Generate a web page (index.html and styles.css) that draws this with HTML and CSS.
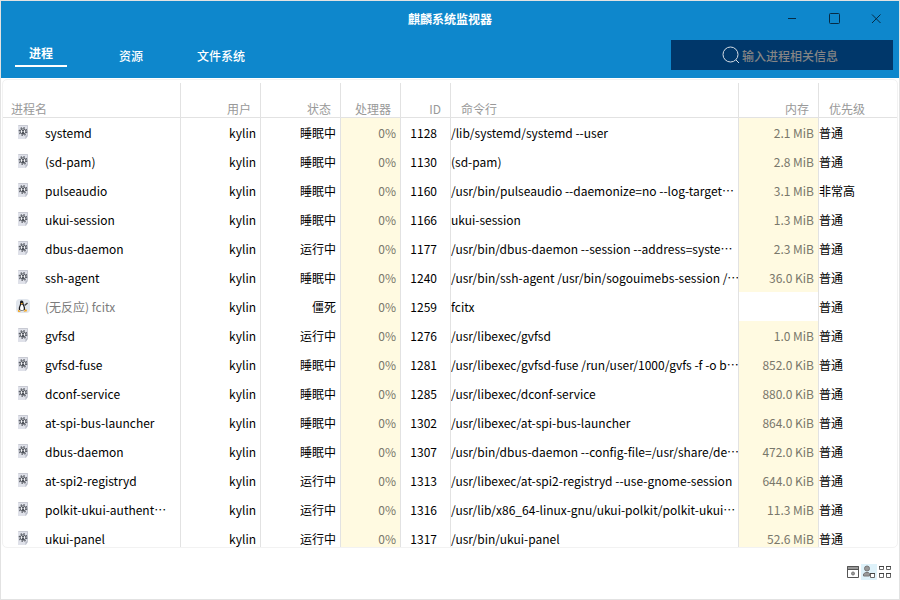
FILE: index.html
```html
<!DOCTYPE html>
<html lang="zh-CN">
<head>
<meta charset="utf-8">
<title>麒麟系统监视器</title>
<link rel="stylesheet" href="styles.css">
</head>
<body>
<svg class="defs" aria-hidden="true">
  <symbol id="icon-exec" viewBox="0 0 16 16">
    <path d="M3 0h10v11l-2 3h-8z" fill="#dfe1e9"/>
    <path d="M3.500 .5h9v10" fill="none" stroke="#c8cad3"/>
    <path d="M10.500 14l2.500-3.500h-2.500z" fill="#b4b7c2"/>
    <circle cx="8" cy="6.500" r="2.700" fill="#f4f5f8" stroke="#50545c"/>
    <circle cx="8" cy="6.500" r="3.700" fill="none" stroke="#5c6068" stroke-width="1.400" stroke-dasharray="1.450 1.450"/>
    <circle cx="8" cy="5.800" r="1" fill="#3f434b"/>
    <path d="M7 7h2v2h-2z" fill="#50545c"/>
  </symbol>
  <symbol id="icon-fcitx" viewBox="0 0 16 16">
    <rect x="1" y="0" width="14" height="14" rx="4" fill="#e1e6ed"/>
    <path d="M6.500 1.500c1.800 0 2 1.700 2.200 3.500.3 2 1.800 3 1.300 5.500-.4 1.500-5.800 1.500-6.200 0C3.500 8 4.800 7 5 5c.1-1.800-.2-3.500 1.500-3.500z" fill="#1d1d20"/>
    <path d="M6.800 5.200c1.600 1 2.600 4.300 1.500 6h-2.800c-1-2-.2-4.800 1.300-6z" fill="#fff"/>
    <path d="M5.500 4h2.500l-1.200 1.500zM2.800 10.500l3.200 2.300-2.800.2zM8.500 12.800l2.500-3 1.200 2.400z" fill="#f5a51d"/>
    <path d="M9.500 6.500l3-2.500" stroke="#444" stroke-width="1.500"/>
  </symbol>
</svg>
<div class="window">
  <header class="topbar">
    <div class="titlebar">
      <h1>麒麟系统监视器</h1>
      <div class="controls">
        <button type="button" aria-label="最小化"><svg viewBox="0 0 12 12"><path d="M2 5.500h8"/></svg></button>
        <button type="button" aria-label="最大化"><svg viewBox="0 0 12 12"><rect x="1.500" y=".5" width="10" height="10" rx="1"/></svg></button>
        <button type="button" aria-label="关闭"><svg viewBox="0 0 12 12"><path d="M2 1.500l8.500 8.500M10.500 1.500l-8.500 8.500"/></svg></button>
      </div>
    </div>
    <div class="toolbar">
      <nav class="tabs">
        <a href="#processes" class="active" aria-current="page">进程</a>
        <a href="#resources">资源</a>
        <a href="#filesystems">文件系统</a>
      </nav>
      <label class="search">
        <svg viewBox="0 0 18 18" aria-hidden="true"><circle cx="8.500" cy="8.500" r="7.500"/><path d="M14 14l3 3"/></svg>
        <input type="text" placeholder="输入进程相关信息" aria-label="输入进程相关信息">
      </label>
    </div>
  </header>
  <main class="list" id="processes">
    <table>
      <colgroup><col class="c-name"><col class="c-user"><col class="c-state"><col class="c-cpu"><col class="c-id"><col><col class="c-mem"><col class="c-prio"></colgroup>
      <thead><tr><th>进程名</th><th class="num">用户</th><th class="num">状态</th><th class="num">处理器</th><th class="num">ID</th><th>命令行</th><th class="num">内存</th><th>优先级</th></tr></thead>
      <tbody id="rows"></tbody>
    </table>
  </main>
  <footer class="views">
    <button type="button" aria-label="活动的进程"><svg viewBox="0 0 16 16"><path d="M2 2h12v4H2z" fill="#999"/><path d="M2.500 2.500h11v11h-11zM2 5.500h12" fill="none" stroke="#555"/><circle cx="8" cy="9.500" r="1.500" fill="#999" stroke="#777"/></svg></button>
    <button type="button" class="selected" aria-label="我的进程"><svg viewBox="0 0 16 16"><circle cx="6" cy="4.500" r="2.500" fill="#999" stroke="#777"/><path d="M2.500 12v-2l2-1.500h3l1 1v2.500z" fill="#999" stroke="#777"/><path d="M9.500 9.500h4v4h-4z" fill="#fff" stroke="#666"/><path d="M9 9.500h5" stroke="#444"/></svg></button>
    <button type="button" aria-label="全部进程"><svg viewBox="0 0 16 16"><path d="M2.500 2.500h4v3h-4zM9.500 2.500h4v3h-4zM2.500 9.500h4v4h-4zM9.500 9.500h4v4h-4z" fill="#fff" stroke="#666"/><path d="M2 2.500h5M9 2.500h5M2 9.500h5M9 9.500h5" stroke="#444"/></svg></button>
  </footer>
</div>
<script src="app.js"></script>
</body>
</html>
```
FILE: styles.css
```css
* { box-sizing: border-box; }

body {
  margin: 0;
  font: 12px/18px "Noto Sans CJK SC", sans-serif;
  color: #000;
  background: #fff;
}

.defs { position: absolute; width: 0; height: 0; }

button {
  padding: 0;
  border: 0;
  background: none;
}

.window {
  display: flex;
  flex-direction: column;
  height: 100vh;
  border: 1px solid #e2e2e2;
}

.topbar {
  flex: none;
  padding-bottom: 8px;
  background: #0e87cc;
  color: #fff;
}

.titlebar {
  display: grid;
  grid-template-columns: 1fr auto 1fr;
  align-items: center;
  height: 36px;
}

.titlebar h1 {
  grid-column: 2;
  margin: 0;
  font-size: 12px;
  font-weight: 700;
}

.controls {
  display: flex;
  justify-content: flex-end;
  gap: 30px;
  padding-right: 17px;
}

.controls button { display: flex; }

.controls svg {
  width: 12px;
  height: 12px;
  fill: none;
  stroke: #062b45;
}

.toolbar {
  display: flex;
  justify-content: space-between;
  align-items: flex-start;
  padding: 3px 6px 0 14px;
}

.tabs {
  display: flex;
  padding-top: 4px;
}

.tabs a {
  width: 90px;
  padding-top: 3px;
  color: #fff;
  font-weight: 500;
  text-align: center;
  text-decoration: none;
}

.tabs .active {
  width: 52px;
  margin-right: 19px;
  padding: 0 0 3px;
  border-bottom: 2px solid #fff;
  font-weight: 700;
}

.search {
  display: flex;
  justify-content: center;
  align-items: center;
  gap: 2px;
  width: 222px;
  height: 30px;
  background: #00376a;
}

.search svg {
  width: 18px;
  height: 18px;
  fill: none;
  stroke: #d5dde6;
}

.search input {
  width: 100px;
  padding: 2px 0 0;
  border: 0;
  outline: 0;
  background: none;
  color: #fff;
  font: inherit;
  font-weight: 500;
}

.search input::placeholder { color: #858585; opacity: 1; }

.list {
  flex: 1;
  min-height: 0;
  margin: 1px 1px 0;
  padding-top: 3px;
  overflow: hidden;
  border: 1px solid #f2f2f2;
  border-radius: 5px;
}

table {
  width: 100%;
  table-layout: fixed;
  border-collapse: separate;
  border-spacing: 0;
}

.c-name { width: 178px; }
.c-user, .c-state, .c-mem { width: 80px; }
.c-cpu { width: 60px; }
.c-id { width: 50px; }
.c-prio { width: 78px; }

th, td {
  overflow: hidden;
  border-right: 1px solid #e2e2e2;
  text-align: left;
  white-space: nowrap;
}

th:last-child, td:last-child { border-right: 0; }

th {
  height: 35px;
  padding: 17px 10px 0;
  border-bottom: 1px solid #e2e2e2;
  color: #999;
  font-weight: 400;
  line-height: 17px;
  vertical-align: top;
}

th:first-child { padding-left: 8px; }
th.num { padding-right: 9px; }

td {
  height: 29px;
  padding: 0;
}

.num { text-align: right; }
td.num { padding-right: 4px; }
td.id { padding-right: 13px; }

.usage {
  background: #fffae1;
  color: #79776b;
}

.name {
  display: flex;
  align-items: center;
  gap: 14px;
  padding: 0 4px 0 12px;
}

.name svg {
  flex: none;
  width: 16px;
  height: 16px;
}

.stopped .name { color: #7c7c7c; }

.views {
  display: flex;
  flex: none;
  justify-content: flex-end;
  align-items: center;
  height: 51px;
  padding: 0 6px 4px 0;
}

.views button { display: flex; }
.views svg { width: 16px; height: 16px; }
.views .selected { background: #def2fa; }
```
FILE: app.js
```js
const processes = [
  ["systemd", "睡眠中", 1128, "/lib/systemd/systemd --user", "2.1 MiB", "普通"],
  ["(sd-pam)", "睡眠中", 1130, "(sd-pam)", "2.8 MiB", "普通"],
  ["pulseaudio", "睡眠中", 1160, "/usr/bin/pulseaudio --daemonize=no --log-target…", "3.1 MiB", "非常高"],
  ["ukui-session", "睡眠中", 1166, "ukui-session", "1.3 MiB", "普通"],
  ["dbus-daemon", "运行中", 1177, "/usr/bin/dbus-daemon --session --address=syste…", "2.3 MiB", "普通"],
  ["ssh-agent", "睡眠中", 1240, "/usr/bin/ssh-agent /usr/bin/sogouimebs-session /…", "36.0 KiB", "普通"],
  ["(无反应) fcitx", "僵死", 1259, "fcitx", "", "普通"],
  ["gvfsd", "运行中", 1276, "/usr/libexec/gvfsd", "1.0 MiB", "普通"],
  ["gvfsd-fuse", "睡眠中", 1281, "/usr/libexec/gvfsd-fuse /run/user/1000/gvfs -f -o b…", "852.0 KiB", "普通"],
  ["dconf-service", "睡眠中", 1285, "/usr/libexec/dconf-service", "880.0 KiB", "普通"],
  ["at-spi-bus-launcher", "睡眠中", 1302, "/usr/libexec/at-spi-bus-launcher", "864.0 KiB", "普通"],
  ["dbus-daemon", "睡眠中", 1307, "/usr/bin/dbus-daemon --config-file=/usr/share/de…", "472.0 KiB", "普通"],
  ["at-spi2-registryd", "运行中", 1313, "/usr/libexec/at-spi2-registryd --use-gnome-session", "644.0 KiB", "普通"],
  ["polkit-ukui-authent…", "运行中", 1316, "/usr/lib/x86_64-linux-gnu/ukui-polkit/polkit-ukui…", "11.3 MiB", "普通"],
  ["ukui-panel", "运行中", 1317, "/usr/bin/ukui-panel", "52.6 MiB", "普通"]
];

document.getElementById("rows").innerHTML = processes.map(([name, state, id, command, memory, priority]) => {
  const zombie = state === "僵死";
  return `<tr class="${zombie ? "stopped" : ""}">
    <td><div class="name"><svg aria-hidden="true"><use href="#${zombie ? "icon-fcitx" : "icon-exec"}"/></svg><span>${name}</span></div></td>
    <td class="num">kylin</td>
    <td class="num">${state}</td>
    <td class="num usage">0%</td>
    <td class="num id">${id}</td>
    <td>${command}</td>
    <td class="num${memory ? " usage" : ""}">${memory}</td>
    <td>${priority}</td>
  </tr>`;
}).join("");
```
